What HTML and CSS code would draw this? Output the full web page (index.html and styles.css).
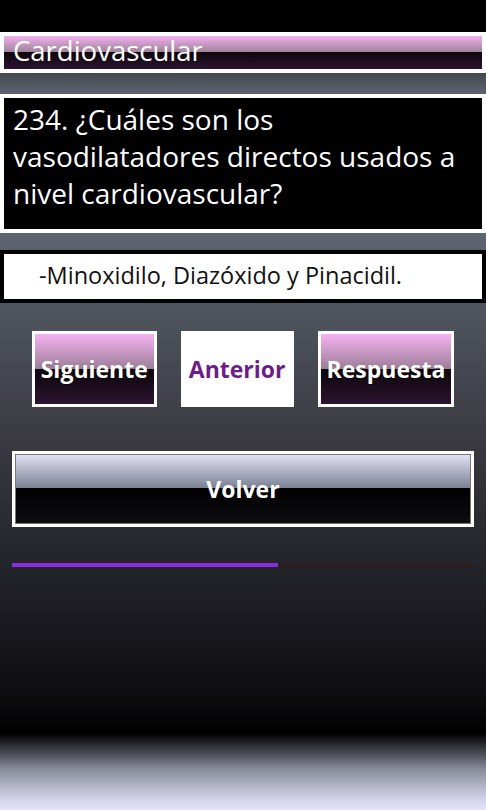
FILE: index.html
```html
<!DOCTYPE html>
<html lang="es">
<head>
    <meta charset="UTF-8">
    <meta name="viewport" content="width=device-width, initial-scale=1.0">
    <title>Cardiovascular</title>
    <link rel="stylesheet" href="styles.css">
</head>
<body>
    <!-- Status area -->
    <div class="status-bar"></div>

    <div class="page">
        <!-- Title -->
        <div class="title-bar">Cardiovascular</div>

        <!-- Question -->
        <div class="question">234. ¿Cuáles son los vasodilatadores directos usados a nivel cardiovascular?</div>

        <!-- Answer -->
        <div class="answer">-Minoxidilo, Diazóxido y Pinacidil.</div>

        <!-- Navigation buttons -->
        <div class="nav-buttons">
            <button class="btn btn-glossy">Siguiente</button>
            <button class="btn btn-plain">Anterior</button>
            <button class="btn btn-glossy">Respuesta</button>
        </div>

        <button class="back-button">Volver</button>

        <div class="progress">
            <div class="progress-fill" style="width: 57.6%"></div>
        </div>
    </div>
</body>
</html>
```

FILE: styles.css
```css
* {
    box-sizing: border-box;
    margin: 0;
    padding: 0;
}

body {
    width: 486px;
    height: 810px;
    overflow: hidden;
    font-family: 'Open Sans', 'Noto Sans', sans-serif;
    color: white;
    background: #000;
    display: flex;
    flex-direction: column;
}

.status-bar {
    height: 32px;
    background: #000;
}

.page {
    flex: 1;
    display: flex;
    flex-direction: column;
    background: linear-gradient(to bottom,
        #44474e 41px,
        #5d6370 62px,
        #5e6470 201px,
        #4b5059 300px,
        #3a3941 408px,
        #25272c 520px,
        #1c1b21 580px,
        #0e0e12 660px,
        #000 701px,
        #2a2c30 713px,
        #50525c 723px,
        #8a8e9c 738px,
        #b0b2c4 753px,
        #d4d4ec 768px,
        #e4e4f8 778px);
}

/* Title */
.title-bar {
    height: 41px;
    border: 4px solid white;
    padding-left: 9px;
    font-size: 27.5px;
    line-height: 30px;
    white-space: nowrap;
    overflow: hidden;
    background: linear-gradient(to bottom, #f4b0f0 0%, #9a8294 50%, #0e060c 50%, #2c1430 100%);
}

/* Question */
.question {
    margin-top: 21px;
    height: 139px;
    border: 4px solid white;
    background: #000;
    padding: 3px 4px 0 9px;
    font-size: 28px;
    line-height: 37px;
}

/* Answer */
.answer {
    margin-top: 17px;
    height: 53px;
    border: 4px solid #000;
    background: white;
    color: #111;
    padding-left: 35px;
    font-size: 23.5px;
    line-height: 43px;
}

/* Navigation buttons */
.nav-buttons {
    margin-top: 28px;
    display: flex;
    justify-content: center;
    gap: 24px;
}

.btn {
    height: 76px;
    border: 3px solid white;
    font-family: inherit;
    font-size: 23px;
    font-weight: 700;
    padding: 0 6px;
    color: white;
}

.btn-glossy {
    background: linear-gradient(to bottom, #f6b2f4 0%, #9c7e96 50%, #0c060a 50%, #2c1430 100%);
    text-shadow: 0 1px 1px rgba(0, 0, 0, 0.4);
}

.btn-plain {
    background: white;
    color: #6c1d8c;
    padding: 0 5px;
}

.back-button {
    margin: 44px 12px 0;
    height: 76px;
    border: 3px solid white;
    font-family: inherit;
    font-size: 23px;
    font-weight: 700;
    color: white;
    background: linear-gradient(to bottom, #e4e4f6 0%, #7c8294 48%, #000 48%, #0e0d12 100%);
    box-shadow: inset 0 0 0 1px #777;
}

/* Progress */
.progress {
    margin: 36px 12px 0;
    height: 4px;
    background: #2c1e1f;
}

.progress-fill {
    height: 100%;
    background: #8a2be2;
}
```
